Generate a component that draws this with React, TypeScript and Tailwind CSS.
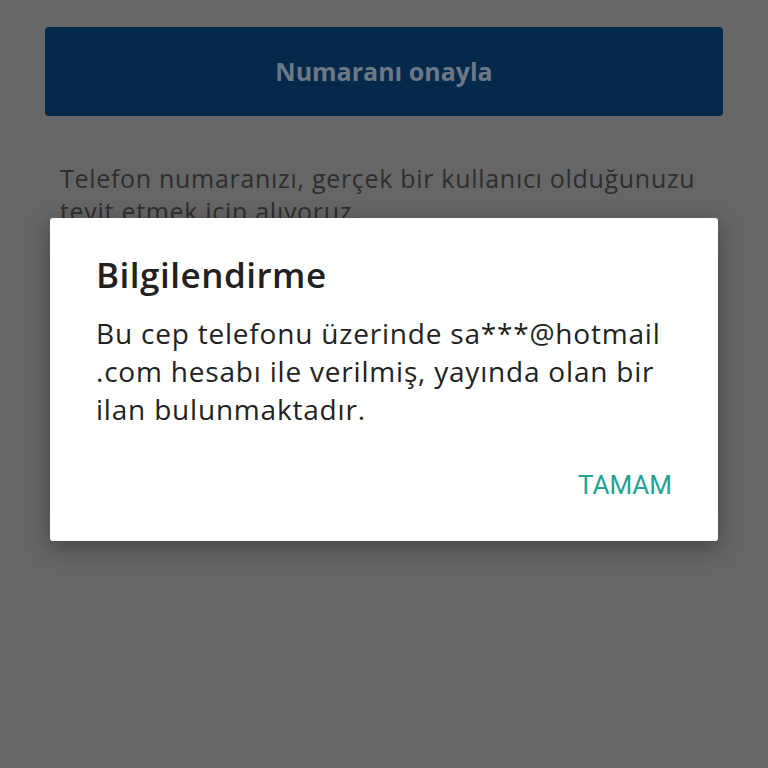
import React from 'react';

export default function App() {
  return (
    <div className="relative h-[768px] w-[768px] overflow-hidden bg-[#666666] font-['Roboto','Noto_Sans',sans-serif]">
      {/* Page behind the dim overlay */}
      <div className="flex flex-col px-[45px] pt-[27px]">
        <button className="flex h-[89px] w-full items-center justify-center rounded-[4px] bg-[#04294b] font-['Open_Sans','Noto_Sans',sans-serif] text-[25px] font-bold text-[#6d7887]">
          Numaranı onayla
        </button>
        <p className="mt-[46px] pl-[15px] font-['Open_Sans','Noto_Sans',sans-serif] text-[25px] leading-[33px] tracking-[0.7px] text-[#2e2e2e]">
          Telefon numaranızı, gerçek bir kullanıcı olduğunuzu
          <br />
          teyit etmek için alıyoruz.
        </p>
      </div>

      {/* Dialog */}
      <div className="absolute left-[50px] top-[218px] flex h-[323px] w-[668px] flex-col rounded-[3px] bg-white px-[46px] pt-[34px] shadow-[0_6px_24px_rgba(0,0,0,0.35)]">
        <h2 className="font-['Open_Sans','Noto_Sans',sans-serif] text-[35px] font-semibold leading-[46px] tracking-[0.5px] text-[#212121]">
          Bilgilendirme
        </h2>
        <p className="mt-[16px] font-['Open_Sans','Noto_Sans',sans-serif] text-[28px] leading-[38px] tracking-[0.8px] text-[#222222]">
          Bu cep telefonu üzerinde sa***@hotmail
          <br />
          .com hesabı ile verilmiş, yayında olan bir
          <br />
          ilan bulunmaktadır.
        </p>
        <div className="mt-auto mb-[40px] flex justify-end">
          <button className="text-[26px] leading-[32px] text-[#21a396]">TAMAM</button>
        </div>
      </div>
    </div>
  );
}
